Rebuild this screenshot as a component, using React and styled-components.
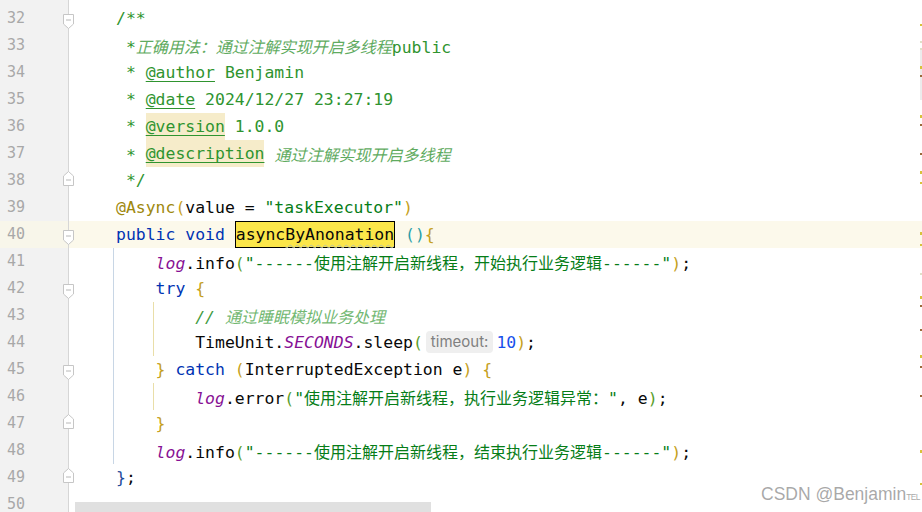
import React from 'react';
import styled, { createGlobalStyle, css } from 'styled-components';

const Global = createGlobalStyle`
  html, body { margin: 0; padding: 0; background: #fff; }
  #root { width: 922px; height: 512px; }
`;

const MONO = `"DejaVu Sans Mono", "Noto Sans CJK SC", monospace`;

const Screen = styled.div`
  position: relative;
  width: 922px;
  height: 512px;
  overflow: hidden;
  box-sizing: border-box;
  padding-top: 5px;
  display: flex;
  flex-direction: column;
  background: linear-gradient(to right, #f2f2f2 0, #f2f2f2 68px, #d6d6d6 68px, #d6d6d6 69px, #ffffff 69px);
`;

const Row = styled.div`
  display: flex;
  height: 27px;
  flex: none;
`;

const Gutter = styled.div`
  position: relative;
  width: 68px;
  flex: none;
  border-right: 1px solid #d6d6d6;
  background: ${p => (p.$current ? '#f8f6ea' : 'transparent')};
`;

const LineNo = styled.span`
  display: block;
  padding-left: 7px;
  font-family: ${MONO};
  font-size: 15px;
  line-height: 27px;
  color: #a8a8a8;
`;

const FoldBox = styled.svg`
  position: absolute;
  left: 63px;
  top: ${p => (p.$open ? 9 : 4)}px;
`;

const Code = styled.div`
  flex: 1;
  display: flex;
  padding-left: 44px;
  background: ${p => (p.$current ? '#fcf9eb' : 'transparent')};
`;

const Indent = styled.span`
  flex: none;
  width: 39.6px;
  box-sizing: border-box;
  border-left: 1px solid ${p => p.$guide || 'transparent'};
`;

const Text = styled.span`
  margin-left: 3px;
  white-space: pre;
  font-family: ${MONO};
  font-size: 16.45px;
  line-height: 28px;
  color: #080808;
`;

const Cjk = styled.span`
  font-family: "Noto Sans CJK SC", sans-serif;
  font-size: 16px;
`;

const kinds = {
  plain: css`color: #080808;`,
  doc: css`color: #2f942f;`,
  docText: css`color: #5fab5f; font-style: italic;`,
  tag: css`color: #2f942f; text-decoration: underline; text-underline-offset: 3px;`,
  tagHl: css`
    color: #2f942f;
    text-decoration: underline;
    text-underline-offset: 3px;
    display: inline-block;
    height: 27px;
    vertical-align: top;
    background: #f6ecca;
  `,
  kw: css`color: #0033b3;`,
  ann: css`color: #9e880d;`,
  str: css`color: #067d17;`,
  num: css`color: #1750eb;`,
  field: css`color: #871094; font-style: italic;`,
  lc: css`color: #3f9b3f; font-style: italic;`,
  lcText: css`color: #72b872; font-style: italic;`,
  gold: css`color: #c5a021;`,
  teal: css`color: #2a9fa8;`,
  green: css`color: #5a9e2c;`,
  navy: css`color: #1f4c9c;`,
  wavy: css`text-decoration: underline wavy #b9c2a4 1px; text-underline-offset: 4px;`,
};

const Tok = styled.span`
  ${p => kinds[p.$k]}
`;

const Match = styled.span`
  display: inline-block;
  height: 27px;
  box-sizing: border-box;
  line-height: 26px;
  vertical-align: top;
  border: 1px solid #000;
  background: #fbe64a;
  color: #080808;
`;

const Hint = styled.span`
  display: inline-block;
  vertical-align: top;
  margin: 2px 3px 0 3px;
  height: 22px;
  line-height: 22px;
  padding: 0 5px;
  border-radius: 4px;
  background: #efefef;
  color: #808080;
  font-family: Inter, "Noto Sans", sans-serif;
  font-size: 15px;
`;

const Stripe = styled.div`
  position: absolute;
  right: 0;
  top: 0;
  width: 2px;
  height: 100%;
`;

const Mark = styled.span`
  position: absolute;
  right: 0;
  width: 2px;
  top: ${p => p.$y}px;
  height: ${p => p.$h}px;
  background: ${p => p.$c};
`;

const Scrollbar = styled.div`
  position: absolute;
  left: 75px;
  bottom: 0;
  width: 356px;
  height: 10px;
  background: #e0e0e0;
`;

const Watermark = styled.div`
  position: absolute;
  left: 761px;
  top: 484px;
  font-family: "Liberation Sans", Arial, sans-serif;
  font-size: 17.5px;
  color: rgba(140, 140, 140, 0.75);
  text-shadow: 0 0 1px rgba(255, 255, 255, 0.8);
  white-space: nowrap;
`;

const Small = styled.span`
  font-size: 8.5px;
  letter-spacing: -0.6px;
`;

const CJK_RE = /([\u3000-\u303f\u4e00-\u9fff\uff00-\uffef]+)/;

function renderText(text) {
  return text.split(CJK_RE).map((part, i) =>
    i % 2 === 1 ? <Cjk key={i}>{part}</Cjk> : part
  );
}

const t = (k, s) => ({ k, s });

const BLUE = '#c8d6e5';
const YEL = '#e9dea8';

const lines = [
  { n: 32, fold: 'open', toks: [t('doc', '/**')] },
  { n: 33, toks: [t('doc', ' *'), t('docText', '正确用法：通过注解实现开启多线程'), t('doc', 'public')] },
  { n: 34, toks: [t('doc', ' * '), t('tag', '@author'), t('doc', ' Benjamin')] },
  { n: 35, toks: [t('doc', ' * '), t('tag', '@date'), t('doc', ' 2024/12/27 23:27:19')] },
  { n: 36, toks: [t('doc', ' * '), t('tagHl', '@version'), t('doc', ' 1.0.0')] },
  { n: 37, toks: [t('doc', ' * '), t('tagHl', '@description'), t('docText', ' 通过注解实现开启多线程')] },
  { n: 38, fold: 'close', toks: [t('doc', ' */')] },
  { n: 39, toks: [t('ann', '@Async'), t('gold', '('), t('plain', 'value = '), t('str', '"taskExecutor"'), t('gold', ')')] },
  {
    n: 40, fold: 'open', current: true,
    toks: [t('kw', 'public void '), t('match', ''), t('plain', ' '), t('teal', '()'), t('gold', '{')],
  },
  {
    n: 41, indents: [BLUE],
    toks: [t('field', 'log'), t('plain', '.info'), t('green', '('), t('str', '"------使用注解开启新线程，开始执行业务逻辑------"'), t('gold', ')'), t('plain', ';')],
  },
  { n: 42, fold: 'open', indents: [BLUE], toks: [t('kw', 'try '), t('gold', '{')] },
  { n: 43, indents: [BLUE, YEL], toks: [t('lc', '// '), t('lcText', '通过睡眠模拟业务处理')] },
  {
    n: 44, indents: [BLUE, YEL],
    toks: [t('plain', 'TimeUnit.'), t('field', 'SECONDS'), t('plain', '.sleep'), t('green', '('), t('hint', 'timeout:'), t('num', '10'), t('gold', ')'), t('plain', ';')],
  },
  {
    n: 45, fold: 'open', indents: [BLUE],
    toks: [t('gold', '}'), t('kw', ' catch '), t('gold', '('), t('plain', 'InterruptedException e'), t('gold', ')'), t('plain', ' '), t('gold', '{')],
  },
  {
    n: 46, indents: [BLUE, YEL],
    toks: [t('field', 'log'), t('plain', '.error'), t('green', '('), t('str', '"使用注解开启新线程，执行业务逻辑异常："'), t('plain', ', e'), t('green', ')'), t('plain', ';')],
  },
  { n: 47, fold: 'close', indents: [BLUE], toks: [t('gold', '}')] },
  {
    n: 48, indents: [BLUE],
    toks: [t('field', 'log'), t('plain', '.info'), t('green', '('), t('str', '"------使用注解开启新线程，结束执行业务逻辑------"'), t('gold', ')'), t('plain', ';')],
  },
  { n: 49, fold: 'close', toks: [t('navy', '}'), t('plain', ';')] },
  { n: 50, toks: [] },
];

function FoldMark({ type }) {
  const open = type === 'open';
  return (
    <FoldBox $open={open} width="11" height="15" viewBox="0 0 11 15">
      <path
        d={open ? 'M0.5 0.5 H10.5 V10 L5.5 14.5 L0.5 10 Z' : 'M0.5 14.5 H10.5 V5 L5.5 0.5 L0.5 5 Z'}
        fill="#ffffff"
        stroke="#c6c6c6"
        strokeWidth="1"
      />
      <line x1="3" x2="8" y1={open ? 6 : 9} y2={open ? 6 : 9} stroke="#b8b8b8" strokeWidth="1" />
    </FoldBox>
  );
}

function Token({ tok }) {
  if (tok.k === 'match') {
    return (
      <Match>
        async<Tok $k="wavy">ByAnonation</Tok>
      </Match>
    );
  }
  if (tok.k === 'hint') return <Hint>{tok.s}</Hint>;
  return <Tok $k={tok.k}>{renderText(tok.s)}</Tok>;
}

const marks = [
  { y: 24, h: 2, c: '#d8c23a' }, { y: 41, h: 2, c: '#e0e0c8' }, { y: 48, h: 2, c: '#e0e0c8' },
  { y: 50, h: 50, c: '#ececec' }, { y: 66, h: 3, c: '#d8c23a' }, { y: 75, h: 2, c: '#9a6a3a' },
  { y: 115, h: 3, c: '#d8c23a' }, { y: 124, h: 2, c: '#9a6a3a' }, { y: 153, h: 2, c: '#9a6a3a' },
  { y: 171, h: 3, c: '#d8c23a' }, { y: 182, h: 2, c: '#d8c23a' }, { y: 232, h: 3, c: '#d8c23a' },
  { y: 244, h: 2, c: '#d8c23a' }, { y: 273, h: 2, c: '#e0e0c8' }, { y: 296, h: 3, c: '#d8c23a' },
  { y: 305, h: 2, c: '#9a6a3a' }, { y: 329, h: 2, c: '#9a6a3a' }, { y: 355, h: 3, c: '#d8c23a' },
  { y: 366, h: 2, c: '#9a6a3a' }, { y: 395, h: 2, c: '#9a6a3a' }, { y: 450, h: 3, c: '#d8c23a' },
  { y: 483, h: 2, c: '#d8c23a' },
];

export default function App() {
  return (
    <>
      <Global />
      <Screen>
        {lines.map(line => (
          <Row key={line.n}>
            <Gutter $current={line.current}>
              <LineNo>{line.n}</LineNo>
              {line.fold && <FoldMark type={line.fold} />}
            </Gutter>
            <Code $current={line.current}>
              {(line.indents || []).map((g, i) => (
                <Indent key={i} $guide={g} />
              ))}
              <Text>
                {line.toks.map((tok, i) => (
                  <Token key={i} tok={tok} />
                ))}
              </Text>
            </Code>
          </Row>
        ))}
        <Stripe>
          {marks.map((m, i) => (
            <Mark key={i} $y={m.y} $h={m.h} $c={m.c} />
          ))}
        </Stripe>
        <Scrollbar />
        <Watermark>
          CSDN @Benjamin<Small>TEL</Small>
        </Watermark>
      </Screen>
    </>
  );
}
